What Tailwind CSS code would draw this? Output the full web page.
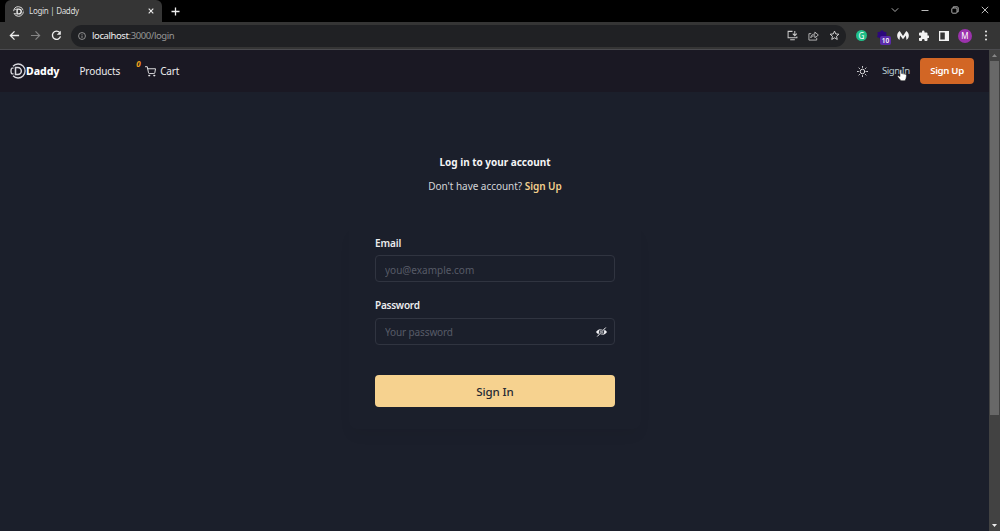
<!DOCTYPE html>
<html lang="en">

<head>
    <meta charset="UTF-8">
    <title>Login | Daddy</title>
    <script src="https://cdn.jsdelivr.net/npm/@tailwindcss/browser@4"></script>
</head>

<body class="w-[1000px] h-[531px] overflow-hidden flex flex-col bg-[#1b1f2b] text-[#ececee] font-['Noto_Sans','Open_Sans',sans-serif] text-[10.5px]">
    <!-- browser tabs -->
    <header class="h-[22px] shrink-0 bg-black flex items-end">
        <div class="ml-[5px] w-[157px] h-[22px] rounded-t-md bg-[#353535] flex items-center pl-2 pr-[8px]">
            <svg class="w-[11px] h-[11px]" viewBox="0 0 16 16" fill="none" stroke="#eee">
                <circle cx="8" cy="8" r="7" stroke-width="1.3" stroke-dasharray="19 3" />
                <path d="M2 5h3M2 11h3" stroke-width="1" />
                <path d="M6 4.5h2.5a3.5 3.5 0 0 1 0 7H6z" stroke-width="2" />
            </svg>
            <span class="ml-[5px] text-[8px] tracking-[-0.3px] text-[#dedede]">Login | Daddy</span>
            <svg class="ml-auto w-[6px] h-[6px]" viewBox="0 0 6 6" stroke="#eee" stroke-width="1.1"><path d="M.7.7l4.6 4.6M5.3.7L.7 5.3" /></svg>
        </div>
        <svg class="ml-[9px] mb-[6px] w-[9px] h-[9px]" viewBox="0 0 9 9" stroke="#eee" stroke-width="1.3"><path d="M4.5.5v8M.5 4.5h8" /></svg>
        <div class="ml-auto mr-[11px] self-center flex items-center gap-[22px] pb-[2px]">
            <svg class="w-2 h-2" viewBox="0 0 8 8" fill="none" stroke="#aaa"><path d="M.8 2.3L4 5.5l3.2-3.2" /></svg>
            <svg class="w-2 h-2" viewBox="0 0 8 8" stroke="#bbb"><path d="M.5 4.5h7" /></svg>
            <svg class="w-2 h-2" viewBox="0 0 8 8" fill="none" stroke="#bbb" stroke-width=".9"><rect x=".8" y="2" width="5.2" height="5.2" rx="1" /><path d="M2.3 1.9V.8h3.9q1 0 1 1v4H6.2" /></svg>
            <svg class="w-2 h-2" viewBox="0 0 8 8" stroke="#bbb"><path d="M.8.8l6.4 6.4M7.2.8L.8 7.2" /></svg>
        </div>
    </header>

    <!-- toolbar -->
    <div class="h-7 shrink-0 bg-[#353535] border-b border-[#4b4b4f] flex items-center pl-[9px] pr-[11px]">
        <svg class="w-[11px] h-[11px]" viewBox="0 0 12 12" fill="none" stroke="#eee" stroke-width="1.4"><path d="M11 6H1.5M6 1.5L1.5 6 6 10.5" /></svg>
        <svg class="ml-[10px] w-[11px] h-[11px]" viewBox="0 0 12 12" fill="none" stroke="#858585" stroke-width="1.3"><path d="M1 6h9.5M6 1.5L10.5 6 6 10.5" /></svg>
        <svg class="ml-[10px] w-[11px] h-[11px]" viewBox="0 0 12 12" fill="none" stroke="#eee" stroke-width="1.5"><path d="M9.5 2.8A4.5 4.5 0 1 0 10.4 7" /><path d="M10.7.8v4.4H6.3z" fill="#eee" stroke="none" /></svg>
        <div class="ml-[9px] w-[775px] h-[22px] rounded-full bg-[#202124] flex items-center pl-[7px] pr-[6px]">
            <svg class="w-2 h-2" viewBox="0 0 10 10" fill="none" stroke="#aaa"><circle cx="5" cy="5" r="4.3" /><path d="M5 4.4v3M5 2.5v1" /></svg>
            <span class="ml-[6px] pt-px text-[9.5px] tracking-[-0.4px] text-[#969696]"><span class="text-[#f1f1f1]">localhost</span>:3000/login</span>
            <div class="ml-auto flex items-center gap-[10px]">
                <svg class="w-[11px] h-[11px]" viewBox="0 0 12 12" fill="none" stroke="#ccc" stroke-width="1.1"><path d="M6 1.5H1.2v7h9.6V7M3.5 10.7h5M8.5 1v5M6.3 4l2.2 2.2L10.7 4" /></svg>
                <svg class="w-[11px] h-[11px]" viewBox="0 0 12 12" fill="none" stroke="#bbb"><path d="M3.5 4H1v7h8.5V8.5M3 8.5c.4-2.8 2-4 4.500-4V2.200L11.300 5.500 7.500 8.500V6.300C5.500 6.300 4 7 3 8.500z" /></svg>
                <svg class="w-[11px] h-[11px]" viewBox="0 0 12 12" fill="none" stroke="#ddd"><path d="M6 1.2l1.4 3.1 3.4.3-2.6 2.3.8 3.4L6 8.500l-3 1.800.8-3.400L1.200 4.600l3.400-.3z" /></svg>
            </div>
        </div>
        <div class="ml-auto flex items-center">
            <span class="-ml-px mr-px w-[11px] h-[11px] rounded-full bg-[#20bf88] text-white text-[8px] leading-[11px] text-center">G</span>
            <div class="relative ml-[9px] mr-px w-[12px] h-[12px]">
                <svg class="w-[10px] h-[10px]" viewBox="0 0 10 10" fill="#2d087c"><path d="M5 0l2 1.700 2.500.5-.3 2.500L10 7 7.500 8 5 10 2.500 8 0 7l.8-2.300L.5 2.200 3 1.700z" /></svg>
                <span class="absolute left-[3px] top-[6px] w-[11px] h-[9px] rounded-[2px] bg-[#5a2bab] text-white text-[6.5px] font-semibold leading-[9px] text-center">10</span>
            </div>
            <svg class="ml-[7px] w-[12px] h-[11px]" viewBox="0 0 12 11" fill="#f3f3f3"><path d="M2.7 1L6 6l3.300-5c3.300 2 3.400 6.500.2 9l-.6-4.500L6 9.300 3.100 5.500 2.500 10C-.7 7.500-.6 3 2.700 1z" /></svg>
            <svg class="ml-[9px] w-[11px] h-[11px]" viewBox="0 0 22 22" fill="#f3f3f3"><path d="M20.500 11H19V7a2 2 0 0 0-2-2h-4V3.500a2.500 2.500 0 0 0-5 0V5H4a2 2 0 0 0-2 2v3.800h1.500a2.700 2.700 0 0 1 0 5.400H2V20c0 1.100.9 2 2 2h3.800v-1.500a2.700 2.700 0 0 1 5.400 0V22H17a2 2 0 0 0 2-2v-4h1.500a2.500 2.500 0 0 0 0-5z" /></svg>
            <svg class="ml-[10px] w-[10px] h-[10px]" viewBox="0 0 10 10"><path d="M0 0h10v10H0z" fill="#f3f3f3" /><path d="M1.300 1.500h4.500v7H1.300z" fill="#353535" /></svg>
            <span class="ml-[9px] w-[14px] h-[14px] rounded-full bg-[#9c33ad] text-white text-[8px] leading-[14px] text-center">M</span>
            <svg class="ml-[11px] w-[6px] h-[11px]" viewBox="0 0 6 11" fill="#eee"><circle cx="3" cy="1.500" r="1" /><circle cx="3" cy="5.500" r="1" /><circle cx="3" cy="9.500" r="1" /></svg>
        </div>
    </div>

    <div class="flex flex-1 min-h-0">
        <div class="w-[989px] flex flex-col">
            <!-- navbar -->
            <nav class="h-[42px] shrink-0 bg-[#1a1823] flex items-center pl-[10px] pr-[15px]">
                <a class="flex items-center">
                    <svg class="w-4 h-4" viewBox="0 0 16 16" fill="none" stroke="#d9d9de">
                        <path d="M3 3.200A7 7 0 1 1 3 12.800M1.600 5.200a7 7 0 0 0 0 5.600M1.500 5.200h2M1.500 10.800h2" stroke-width="1.300" />
                        <path d="M5.500 4.500h2.300a3.500 3.500 0 0 1 0 7H5.500z" stroke-width="1.500" />
                    </svg>
                    <span class="pt-px text-[10.5px] font-extrabold tracking-[-0.05px] text-white">Daddy</span>
                </a>
                <a class="ml-[20px] pt-px text-[10px] tracking-[-0.1px]">Products</a>
                <a class="relative ml-[25px] flex items-center gap-1 text-[10px] tracking-[-0.15px]">
                    <span class="absolute -left-[9px] -top-[4px] text-[8px] leading-[10px] font-bold italic text-[#f5a21b]">0</span>
                    <svg class="w-[11px] h-[11px]" viewBox="0 0 24 24" fill="none" stroke="currentColor" stroke-width="2" stroke-linecap="round" stroke-linejoin="round"><circle cx="9" cy="21" r="1.200" /><circle cx="20" cy="21" r="1.200" /><path d="M1 1.500h4l2.700 13.400a2 2 0 0 0 2 1.600h9.700a2 2 0 0 0 2-1.600L23 6H6" /></svg>
                    <span class="pt-px">Cart</span>
                </a>
                <div class="ml-auto flex items-center">
                    <svg class="w-[11px] h-[11px]" viewBox="0 0 24 24" fill="none" stroke="currentColor" stroke-width="2" stroke-linecap="round"><circle cx="12" cy="12" r="5" /><path d="M12 1v2M12 21v2M4.200 4.200l1.400 1.400M18.400 18.400l1.400 1.400M1 12h2M21 12h2M4.200 19.800l1.400-1.400M18.400 5.600l1.400-1.400" /></svg>
                    <a class="relative ml-[14px] w-[28px] whitespace-nowrap pt-px text-[9.6px] tracking-[-0.5px] text-[#b9cbd0]">Sign In
                        <svg class="absolute left-[15px] top-[6px] w-[10px] h-[12px]" viewBox="0 0 10 12" fill="#fff" stroke="#222" stroke-width=".5"><path d="M3 1q1-1 1.600.3V4.500l4 .8q1 .3.900 1.500L9 9.500 8 11.700H4L.7 7.800Q.3 6.500 1.500 6.700L3 7.600z" /></svg>
                    </a>
                    <button class="ml-[10px] w-[54px] h-[26px] rounded-[4px] bg-[#d26625] pt-px text-[9.6px] tracking-[-0.3px] font-semibold text-white">Sign Up</button>
                </div>
            </nav>

            <!-- login form -->
            <main class="flex flex-col items-center pt-[62px] pl-px">
                <h1 class="h-4 leading-4 text-[10px] tracking-[-0.02px] font-bold text-[#f4f4f5]">Log in to your account</h1>
                <p class="mt-2 h-4 leading-4 text-[10px] tracking-[-0.04px] text-[#d4d5d9]">Don't have account? <a class="font-semibold text-[#f4d08d]">Sign Up</a></p>
                <form class="mt-[32px] w-[292px] px-[26px] pt-[9px] pb-[22px] rounded-lg shadow-[0_8px_14px_-2px_rgba(0,0,0,0.05)] flex flex-col">
                    <label class="h-4 leading-4 text-[10px] tracking-[-0.1px] font-semibold">Email</label>
                    <input type="email" placeholder="you@example.com" class="mt-[4px] h-[27px] rounded-[4px] border border-[#303440] px-[9px] pt-[3px] placeholder:text-[#575b67] text-[10px]">
                    <label class="mt-[15px] h-4 leading-4 text-[10px] tracking-[-0.25px] font-semibold">Password</label>
                    <div class="mt-[5px] h-[27px] rounded-[4px] border border-[#303440] flex items-center pl-[9px] pr-[7px]">
                        <input type="password" placeholder="Your password" class="flex-1 min-w-0 pt-[2px] placeholder:text-[#575b67] text-[10px] tracking-[-0.12px]">
                        <svg class="w-[11px] h-[10px]" viewBox="0 0 22 20"><path d="M0 10C5 2 17 2 22 10 17 18 5 18 0 10z" fill="#f1f1f4" /><circle cx="11" cy="10" r="4.500" fill="none" stroke="#1b1f2b" stroke-width="1.800" /><path d="M3 19L19 1" stroke="#1b1f2b" stroke-width="4" /><path d="M2.500 19L19.500 1" stroke="#f1f1f4" stroke-width="2" /></svg>
                    </div>
                    <button class="mt-[30px] h-[32px] rounded-[4px] bg-[#f6d28f] pt-px text-[11.5px] tracking-[-0.1px] font-medium text-[#252832]">Sign In</button>
                </form>
            </main>
        </div>

        <!-- scrollbar -->
        <div class="w-[11px] bg-[#424242] flex flex-col items-center">
            <svg class="mt-[4px] w-[5px] h-[3px]" viewBox="0 0 5 3" fill="#888"><path d="M0 3L2.500 0 5 3z" /></svg>
            <div class="mt-1 w-[9px] h-[354px] bg-[#686868]"></div>
            <svg class="mt-auto mb-[4px] w-[5px] h-[3px]" viewBox="0 0 5 3" fill="#eee"><path d="M0 0l2.500 3L5 0z" /></svg>
        </div>
    </div>
</body>

</html>
